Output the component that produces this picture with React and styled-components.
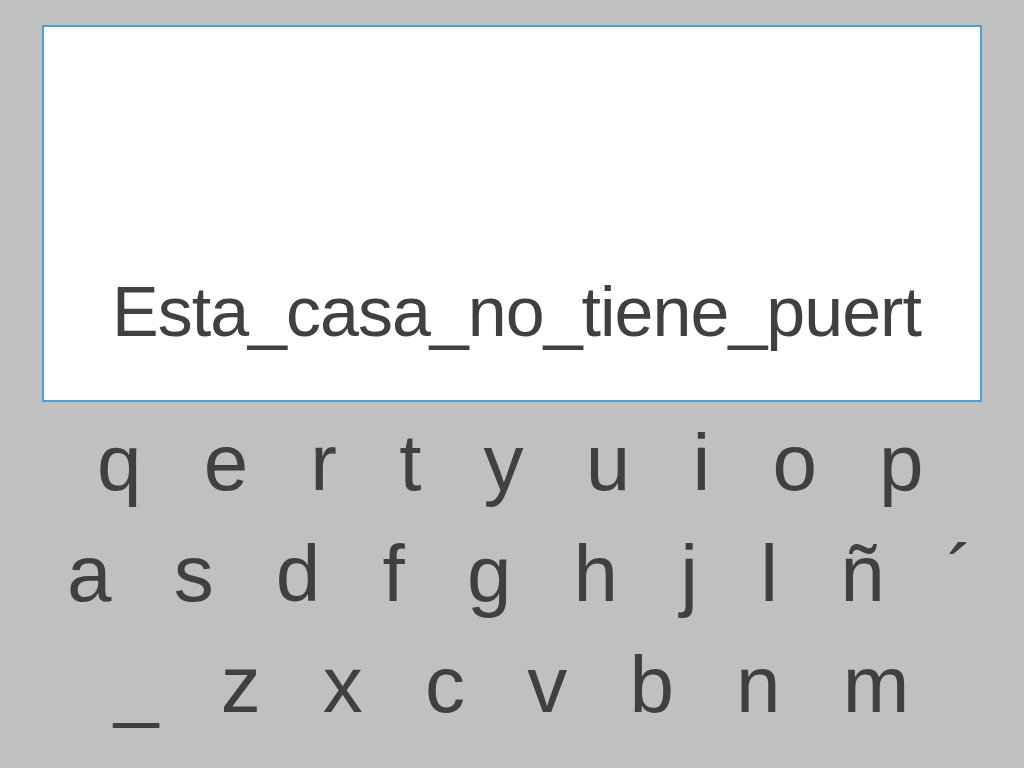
import styled, { createGlobalStyle } from 'styled-components'

const GlobalStyle = createGlobalStyle`
    html, body {
        margin: 0;
        padding: 0;
        background-color: #c0c0c0;
    }
`;

const rows = [
    ['q', 'e', 'r', 't', 'y', 'u', 'i', 'o', 'p'],
    ['a', 's', 'd', 'f', 'g', 'h', 'j', 'l', 'ñ', '´'],
    ['_', 'z', 'x', 'c', 'v', 'b', 'n', 'm'],
]

const rowIndent = [97, 67, 114]

const App = () => {
    return (
        <Page>
            <GlobalStyle />
            <Display>
                <Typed>Esta_casa_no_tiene_puert</Typed>
            </Display>
            <Keyboard>
                {rows.map((keys, i) => (
                    <KeyRow key={i} indent={rowIndent[i]}>
                        {keys.join('   ')}
                    </KeyRow>
                ))}
            </Keyboard>
        </Page>
    )
}

export default App


const Page = styled.div`
    width: 1024px;
    height: 768px;
    overflow: hidden;
    padding-top: 25px;
    box-sizing: border-box;
    font-family: "Liberation Sans", Arial, sans-serif;
    color: #404040;
`;

const Display = styled.div`
    margin-left: 42px;
    width: 940px;
    height: 377px;
    box-sizing: border-box;
    border: 2px solid #45a4d0;
    background-color: #ffffff;
    display: flex;
    align-items: flex-end;
    padding: 0 0 48px 68px;
`;

const Typed = styled.div`
    font-size: 70px;
    line-height: 80px;
    letter-spacing: -1px;
    white-space: pre;
`;

const Keyboard = styled.div`
    display: flex;
    flex-direction: column;
    padding-top: 5px;
`;

const KeyRow = styled.div`
    font-size: 80px;
    line-height: 111px;
    word-spacing: -1.5px;
    white-space: pre;
    padding-left: ${props => props.indent}px;
`;
